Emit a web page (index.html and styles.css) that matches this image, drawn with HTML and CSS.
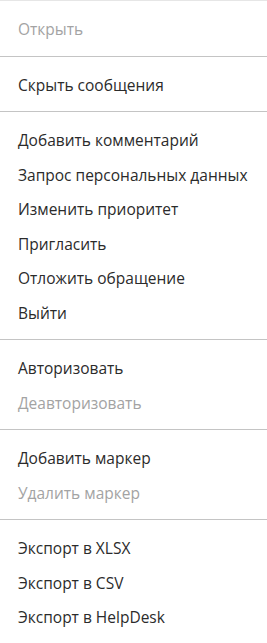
FILE: index.html
```html
<!DOCTYPE html>
<html lang="ru">
<head>
    <meta charset="UTF-8">
    <title>Меню</title>
    <link rel="stylesheet" href="styles.css">
</head>
<body>
<div class="menu">
    <div class="group">
        <div class="item disabled">Открыть</div>
    </div>
    <div class="group">
        <div class="item">Скрыть сообщения</div>
    </div>
    <div class="group">
        <div class="item">Добавить комментарий</div>
        <div class="item">Запрос персональных данных</div>
        <div class="item">Изменить приоритет</div>
        <div class="item">Пригласить</div>
        <div class="item">Отложить обращение</div>
        <div class="item">Выйти</div>
    </div>
    <div class="group">
        <div class="item">Авторизовать</div>
        <div class="item disabled">Деавторизовать</div>
    </div>
    <div class="group">
        <div class="item">Добавить маркер</div>
        <div class="item disabled">Удалить маркер</div>
    </div>
    <div class="group last">
        <div class="item">Экспорт в XLSX</div>
        <div class="item">Экспорт в CSV</div>
        <div class="item">Экспорт в HelpDesk</div>
    </div>
</div>
</body>
</html>
```

FILE: styles.css
```css
*{
    margin: 0;
    padding: 0;
    box-sizing: border-box;
}
body{
    background: #fff;
    font-family: "Open Sans", "Noto Sans", sans-serif;
    font-size: 15.5px;
    color: #2b2b2b;
}
.menu{
    width: 267px;
    border-top: 1px solid #e6e6e6;
}
.group{
    padding: 11px 0 9px;
    border-bottom: 1px solid #c4c4c4;
}
.group.last{
    border-bottom: none;
}
.item{
    line-height: 34.5px;
    padding: 0 18px;
    white-space: nowrap;
}
.disabled{
    color: #a3a3a3;
}
```
